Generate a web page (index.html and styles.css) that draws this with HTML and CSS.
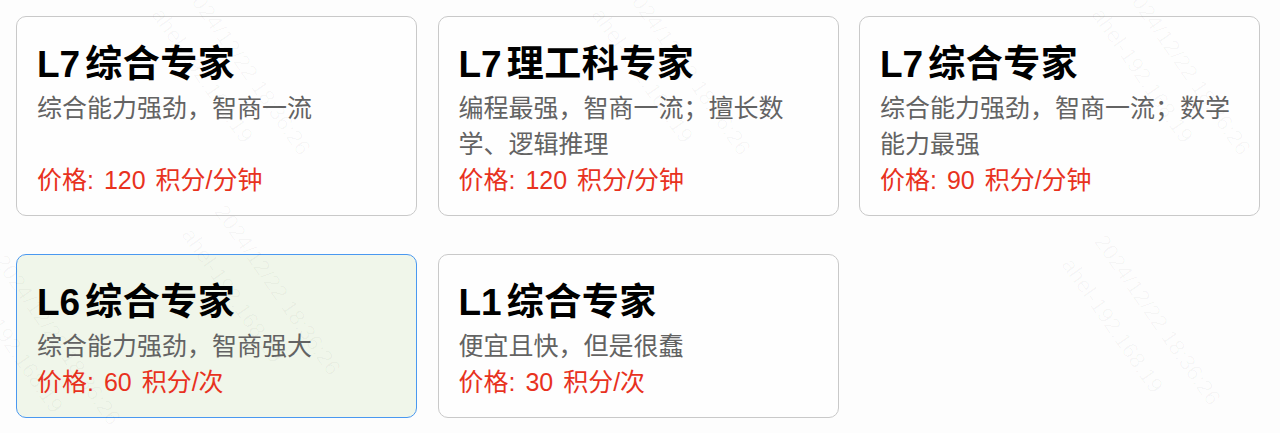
FILE: index.html
```html
<!DOCTYPE html>
<html lang="zh-CN">
<head>
<meta charset="utf-8">
<title>专家列表</title>
<link rel="stylesheet" href="styles.css">
</head>
<body>
<main class="grid">
  <div class="card">
    <div class="title"><span class="lv">L7</span>综合专家</div>
    <div class="desc">综合能力强劲，智商一流</div>
    <div class="price">价格: 120 积分/分钟</div>
  </div>
  <div class="card">
    <div class="title"><span class="lv">L7</span>理工科专家</div>
    <div class="desc">编程最强，智商一流；擅长数学、逻辑推理</div>
    <div class="price">价格: 120 积分/分钟</div>
  </div>
  <div class="card">
    <div class="title"><span class="lv">L7</span>综合专家</div>
    <div class="desc">综合能力强劲，智商一流；数学能力最强</div>
    <div class="price">价格: 90 积分/分钟</div>
  </div>
  <div class="card selected">
    <div class="title"><span class="lv">L6</span>综合专家</div>
    <div class="desc">综合能力强劲，智商强大</div>
    <div class="price">价格: 60 积分/次</div>
  </div>
  <div class="card">
    <div class="title"><span class="lv">L1</span>综合专家</div>
    <div class="desc">便宜且快，但是很蠢</div>
    <div class="price">价格: 30 积分/次</div>
  </div>
</main>
<div class="watermark" aria-hidden="true">
  <div class="wm wm1"><span>2024/12/22 18:36:26</span><span>ahel-192.168.19</span></div>
  <div class="wm wm2"><span>2024/12/22 18:36:26</span><span>ahel-192.168.19</span></div>
  <div class="wm wm3"><span>2024/12/22 18:36:26</span><span>ahel-192.168.19</span></div>
  <div class="wm wm4"><span>2024/12/22 18:36:26</span><span>ahel-192.168.19</span></div>
  <div class="wm wm5"><span>2024/12/22 18:36:26</span><span>ahel-192.168.19</span></div>
  <div class="wm wm6"><span>2024/12/22 18:36:26</span><span>ahel-192.168.19</span></div>
</div>
</body>
</html>
```
FILE: styles.css
```css
html, body {
  margin: 0;
  padding: 0;
  background: #fdfdfd;
  font-family: "Liberation Sans", "Noto Sans CJK SC", sans-serif;
  overflow: hidden;
}

body {
  position: relative;
  width: 1280px;
  height: 433px;
}

.grid {
  display: grid;
  grid-template-columns: repeat(3, 401px);
  column-gap: 20.5px;
  row-gap: 38px;
  padding: 16px 0 0 16px;
  align-items: stretch;
}

.card {
  box-sizing: border-box;
  border: 1px solid #c9c9c9;
  border-radius: 10px;
  background: #fefefe;
  padding: 23px 20px 17px 20px;
  display: flex;
  flex-direction: column;
}

.card.selected {
  border-color: #4a98f0;
  background: #f0f6ea;
}

.title {
  font-size: 37px;
  line-height: 50px;
  font-weight: bold;
  color: #000;
  letter-spacing: 0.5px;
}

.lv {
  letter-spacing: 0;
  padding-right: 5px;
}

.desc {
  font-size: 25px;
  line-height: 36px;
  color: #636363;
}

.price {
  margin-top: auto;
  font-size: 25px;
  line-height: 36px;
  color: #e8321e;
  word-spacing: 3px;
}

.watermark {
  position: absolute;
  inset: 0;
  pointer-events: none;
  overflow: hidden;
}

.wm {
  position: absolute;
  display: flex;
  flex-direction: column;
  gap: 14px;
  transform: rotate(55deg);
  transform-origin: 0 0;
  font-family: "Liberation Sans", sans-serif;
  font-size: 22px;
  color: rgba(0, 0, 0, 0.03);
  white-space: nowrap;
}

.wm1 { left: 200px; top: -20px; }
.wm2 { left: 230px; top: 200px; }
.wm3 { left: 640px; top: -20px; }
.wm4 { left: 1140px; top: -20px; }
.wm5 { left: 1110px; top: 230px; }
.wm6 { left: 10px; top: 250px; }
```
